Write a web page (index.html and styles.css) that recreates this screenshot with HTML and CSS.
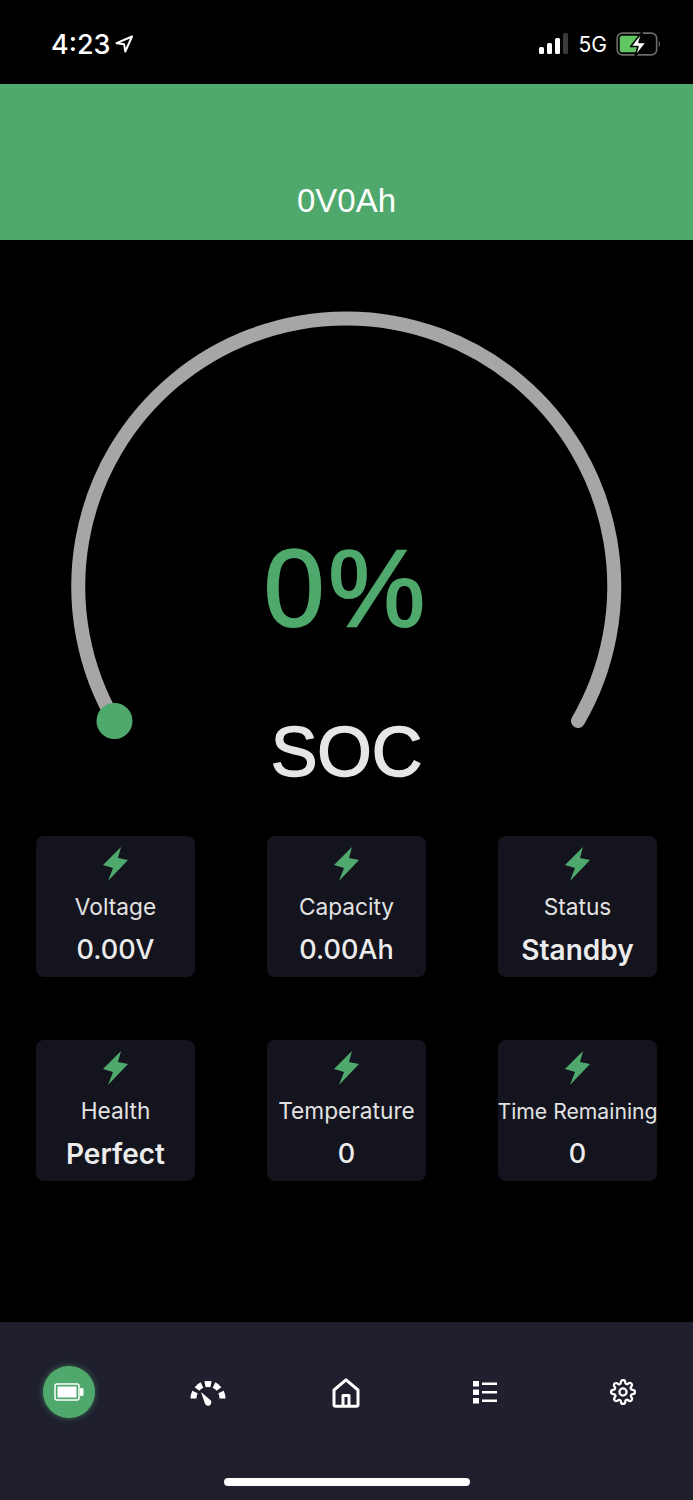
FILE: index.html
```html
<!DOCTYPE html>
<html lang="en">
<head>
    <meta charset="UTF-8">
    <meta name="viewport" content="width=device-width, initial-scale=1.0">
    <title>Battery</title>
    <link rel="stylesheet" href="styles.css">
</head>
<body>
    <div class="status-bar">
        <div class="status-left">
            <span class="clock">4:23</span>
            <svg class="arrow" width="20" height="20" viewBox="0 0 20 20"><path d="M18 2.500 2.500 9.200l7.600 1 1.200 7.300z" fill="none" stroke="#fff" stroke-width="2" stroke-linejoin="round"/></svg>
        </div>
        <div class="status-right">
            <svg width="31" height="22" viewBox="0 0 31 22">
                <rect x="0" y="14" width="5" height="7" rx="1.500" fill="#fff"/>
                <rect x="8" y="10" width="5" height="11" rx="1.500" fill="#fff"/>
                <rect x="16" y="5" width="5" height="16" rx="1.500" fill="#fff"/>
                <rect x="24" y="0" width="5" height="21" rx="1.500" fill="#3a3a3a"/>
            </svg>
            <span class="network">5G</span>
            <svg width="46" height="27" viewBox="0 0 44 26">
                <rect x="1" y="2" width="38" height="21" rx="5" fill="none" stroke="#6b6b6b" stroke-width="1.600"/>
                <rect x="3.500" y="4.500" width="19" height="16" rx="2.500" fill="#5fc75f"/>
                <path d="M41 9.500c1.600.5 1.600 5.500 0 6z" fill="#6b6b6b"/>
                <path d="M25 1 14 15h7l-3 10 11-14h-7z" fill="#fff" stroke="#000" stroke-width="1.500" stroke-linejoin="round"/>
            </svg>
        </div>
    </div>

    <header class="banner">0V0Ah</header>

    <section class="gauge">
        <svg class="gauge-ring" width="693" height="440" viewBox="0 0 693 440">
            <path d="M114.500 411A268 268 0 1 1 578 411" fill="none" stroke="#a6a6a6" stroke-width="14" stroke-linecap="round"/>
            <circle cx="114.500" cy="411" r="18" fill="#4fa96c"/>
        </svg>
        <div class="gauge-value">0%</div>
        <div class="gauge-label">SOC</div>
    </section>

    <section class="cards">
        <div class="card">
            <svg class="bolt" width="28" height="34" viewBox="0 0 28 34"><path d="M19 0 1 18l10 3-5 13 20-21-10-2z" fill="#4fa96c"/></svg>
            <div class="card-title">Voltage</div>
            <div class="card-value">0.00V</div>
        </div>
        <div class="card">
            <svg class="bolt" width="28" height="34" viewBox="0 0 28 34"><path d="M19 0 1 18l10 3-5 13 20-21-10-2z" fill="#4fa96c"/></svg>
            <div class="card-title">Capacity</div>
            <div class="card-value">0.00Ah</div>
        </div>
        <div class="card">
            <svg class="bolt" width="28" height="34" viewBox="0 0 28 34"><path d="M19 0 1 18l10 3-5 13 20-21-10-2z" fill="#4fa96c"/></svg>
            <div class="card-title">Status</div>
            <div class="card-value card-value-word">Standby</div>
        </div>
        <div class="card">
            <svg class="bolt" width="28" height="34" viewBox="0 0 28 34"><path d="M19 0 1 18l10 3-5 13 20-21-10-2z" fill="#4fa96c"/></svg>
            <div class="card-title">Health</div>
            <div class="card-value card-value-word">Perfect</div>
        </div>
        <div class="card">
            <svg class="bolt" width="28" height="34" viewBox="0 0 28 34"><path d="M19 0 1 18l10 3-5 13 20-21-10-2z" fill="#4fa96c"/></svg>
            <div class="card-title">Temperature</div>
            <div class="card-value">0</div>
        </div>
        <div class="card">
            <svg class="bolt" width="28" height="34" viewBox="0 0 28 34"><path d="M19 0 1 18l10 3-5 13 20-21-10-2z" fill="#4fa96c"/></svg>
            <div class="card-title card-title-long">Time Remaining</div>
            <div class="card-value">0</div>
        </div>
    </section>

    <nav class="tabbar">
        <div class="tab tab-active">
            <svg width="30" height="18" viewBox="0 0 30 18">
                <rect x="1" y="1" width="24" height="16" rx="2" fill="none" stroke="#fff" stroke-width="1.500"/>
                <rect x="3.500" y="3.500" width="19" height="11" fill="#fff"/>
                <rect x="26" y="5" width="3.500" height="8" rx="1" fill="#fff"/>
            </svg>
        </div>
        <div class="tab tab-low">
            <svg width="36" height="26" viewBox="0 0 36 26">
                <g fill="none" stroke="#fff" stroke-width="6">
                    <path d="M3.500 18.500A14.500 14.500 0 0 1 5 12"/>
                    <path d="M7 9A14.500 14.500 0 0 1 12 5"/>
                    <path d="M15 4.200A14.500 14.500 0 0 1 21 4.200"/>
                    <path d="M24 5A14.500 14.500 0 0 1 29 9"/>
                    <path d="M31 12A14.500 14.500 0 0 1 32.500 18.500"/>
                </g>
                <path d="M11 12 20.300 20a3.300 3.300 0 1 1-5.400 3.400z" fill="#fff"/>
            </svg>
        </div>
        <div class="tab tab-low">
            <svg width="28" height="30" viewBox="0 0 28 30" fill="none" stroke="#fff" stroke-width="3" stroke-linejoin="round">
                <path d="M14 1.800 2 12v14.500c0 1 .6 1.700 1.700 1.700h20.600c1 0 1.700-.7 1.700-1.700V12z"/>
                <path d="M11 28V17.500h6V28"/>
            </svg>
        </div>
        <div class="tab">
            <svg width="24" height="23" viewBox="0 0 24 23" fill="#fff">
                <rect x="0" y="0" width="6" height="5.500"/>
                <rect x="0" y="8.500" width="6" height="5.500"/>
                <rect x="0" y="17" width="6" height="5.500"/>
                <rect x="9" y="1.500" width="15" height="2.500"/>
                <rect x="9" y="10" width="15" height="2.500"/>
                <rect x="9" y="18.500" width="15" height="2.500"/>
            </svg>
        </div>
        <div class="tab">
            <svg width="26" height="26" viewBox="0 0 24 24" fill="none" stroke="#fff" stroke-width="2.100" stroke-linejoin="round">
                <circle cx="12" cy="12" r="3.300"/>
                <path d="M19.400 15a1.650 1.650 0 0 0 .33 1.820l.06.06a2 2 0 1 1-2.830 2.830l-.06-.06a1.650 1.650 0 0 0-2.800 1.170V21a2 2 0 1 1-4 0v-.09a1.650 1.650 0 0 0-2.800-1.170l-.06.06a2 2 0 1 1-2.830-2.830l.06-.06A1.650 1.650 0 0 0 3.300 14H3a2 2 0 1 1 0-4h.09a1.650 1.650 0 0 0 1.170-2.800l-.06-.06a2 2 0 1 1 2.830-2.830l.06.06A1.650 1.650 0 0 0 10 3.300V3a2 2 0 1 1 4 0v.09a1.650 1.650 0 0 0 2.800 1.170l.06-.06a2 2 0 1 1 2.830 2.830l-.06.06A1.650 1.650 0 0 0 20.700 10H21a2 2 0 1 1 0 4h-.09a1.650 1.650 0 0 0-1.510 1z"/>
            </svg>
        </div>
        <div class="home-indicator"></div>
    </nav>
</body>
</html>
```

FILE: styles.css
```css
* {
    box-sizing: border-box;
}

html, body {
    margin: 0;
    padding: 0;
}

body {
    width: 693px;
    height: 1500px;
    overflow: hidden;
    display: flex;
    flex-direction: column;
    background-color: #000;
    color: #fff;
    font-family: "Liberation Sans", Arial, sans-serif;
}

.status-bar {
    height: 84px;
    padding: 4px 31px 0 51px;
    display: flex;
    justify-content: space-between;
    align-items: center;
}

.status-left, .status-right {
    display: flex;
    align-items: center;
}

.status-left {
    gap: 4px;
}

.status-right {
    gap: 9px;
}

.clock {
    font-family: Inter, sans-serif;
    font-size: 27px;
    font-weight: 500;
}

.network {
    font-family: Inter, sans-serif;
    font-size: 21px;
}

.banner {
    height: 156px;
    padding-bottom: 22px;
    background-color: #4fa96c;
    font-size: 33px;
    display: flex;
    justify-content: center;
    align-items: flex-end;
    line-height: 34px;
}

.gauge {
    position: relative;
    height: 596px;
    display: flex;
    flex-direction: column;
    align-items: center;
}

.gauge-ring {
    position: absolute;
    top: 70px;
    left: 0;
}

.gauge-value {
    margin-top: 290px;
    font-size: 109px;
    line-height: 116px;
    letter-spacing: 4px;
    color: #4fa96c;
    -webkit-text-stroke: 2px #4fa96c;
}

.gauge-label {
    margin-top: 66px;
    font-size: 70px;
    line-height: 80px;
    color: #e6e6e6;
    -webkit-text-stroke: 1.500px #e6e6e6;
}

.cards {
    padding: 0 36px;
    display: grid;
    grid-template-columns: repeat(3, 159px);
    grid-auto-rows: 141px;
    column-gap: 72px;
    row-gap: 63px;
}

.card {
    padding-top: 11px;
    border-radius: 8px;
    background-color: #14141f;
    display: flex;
    flex-direction: column;
    align-items: center;
    font-family: Inter, sans-serif;
}

.bolt {
    flex: none;
}

.card-title {
    margin-top: 12px;
    font-size: 22.700px;
    line-height: 28px;
    color: #e2e2e2;
    white-space: nowrap;
}

.card-title-long {
    font-size: 21.200px;
}

.card-value {
    margin-top: 13px;
    font-size: 27px;
    line-height: 32px;
    font-weight: 500;
    color: #ececec;
}

.card-value-word {
    font-size: 28px;
    font-weight: 600;
}

.tabbar {
    position: relative;
    margin-top: 141px;
    height: 178px;
    padding: 44px 0 0;
    background-color: #1f1f2e;
    display: grid;
    grid-template-columns: repeat(5, 138.500px);
    align-content: start;
}

.tab {
    height: 52px;
    display: flex;
    justify-content: center;
    align-items: center;
}

.tab-low {
    padding-top: 2px;
}

.tab-active {
    width: 52px;
    justify-self: center;
    border-radius: 50%;
    background-color: #4fa96c;
    box-shadow: 0 0 6px rgba(79, 169, 108, 0.6);
}

.home-indicator {
    position: absolute;
    left: 224px;
    bottom: 14px;
    width: 246px;
    height: 8px;
    border-radius: 4px;
    background-color: #fff;
}
```
